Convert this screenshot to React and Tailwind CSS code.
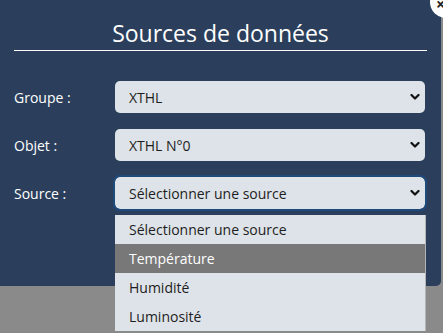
import React from "react";

const font = { fontFamily: '"Open Sans", "Noto Sans", sans-serif' };

function Chevron() {
  return (
    <svg width="10" height="7" viewBox="0 0 10 7" className="absolute right-[5px] top-1/2 -translate-y-1/2">
      <path d="M1.5 1.5 L5 5 L8.5 1.5" fill="none" stroke="#111" strokeWidth="2.2" strokeLinecap="round" strokeLinejoin="round" />
    </svg>
  );
}

function Select({ value, focused }) {
  return (
    <div
      className={
        "relative w-[310px] h-[32px] rounded-[5px] bg-[#dde3e8] flex items-center pl-[14px] text-[14px] text-[#1d1d1d] " +
        (focused ? "outline outline-2 outline-[#1f4a7c]" : "")
      }
    >
      {value}
      <Chevron />
    </div>
  );
}

export default function App() {
  const rows = [
    { label: "Groupe :", value: "XTHL" },
    { label: "Objet :", value: "XTHL N°0" },
    { label: "Source :", value: "Sélectionner une source", focused: true },
  ];
  const options = ["Sélectionner une source", "Température", "Humidité", "Luminosité"];
  return (
    <div className="relative w-[443px] h-[333px] bg-[#8a8a8a] overflow-hidden" style={font}>
      <div className="w-[441px] h-[286px] bg-[#2b3f5c] rounded-br-[5px] flex flex-col">
        <div className="pt-[19px] text-center text-[23px] leading-[28px] text-white">Sources de données</div>
        <div className="mx-[14px] mt-[3px] h-px bg-white" />
        <div className="mt-[30px] flex flex-col gap-[16px]">
          {rows.map((r) => (
            <div key={r.label} className="flex items-center">
              <div className="w-[115px] pl-[14px] text-[14px] font-medium text-white">{r.label}</div>
              <Select value={r.value} focused={r.focused} />
            </div>
          ))}
        </div>
      </div>
      <div className="absolute left-[115px] top-[215px] w-[311px] bg-[#dde3e8] border-r border-[#b5b5b5] text-[14px] text-[#1d1d1d]">
        {options.map((o, i) => (
          <div
            key={o}
            className={
              "h-[29px] flex items-center pl-[14px] " + (i === 1 ? "bg-[#787878] text-white" : "")
            }
          >
            {o}
          </div>
        ))}
      </div>
      <div className="absolute left-[430px] top-[-14px] w-[32px] h-[32px] rounded-full bg-white">
        <span className="absolute left-[6px] top-[10px] text-[16px] leading-[16px] font-bold text-[#222]">×</span>
      </div>
    </div>
  );
}
